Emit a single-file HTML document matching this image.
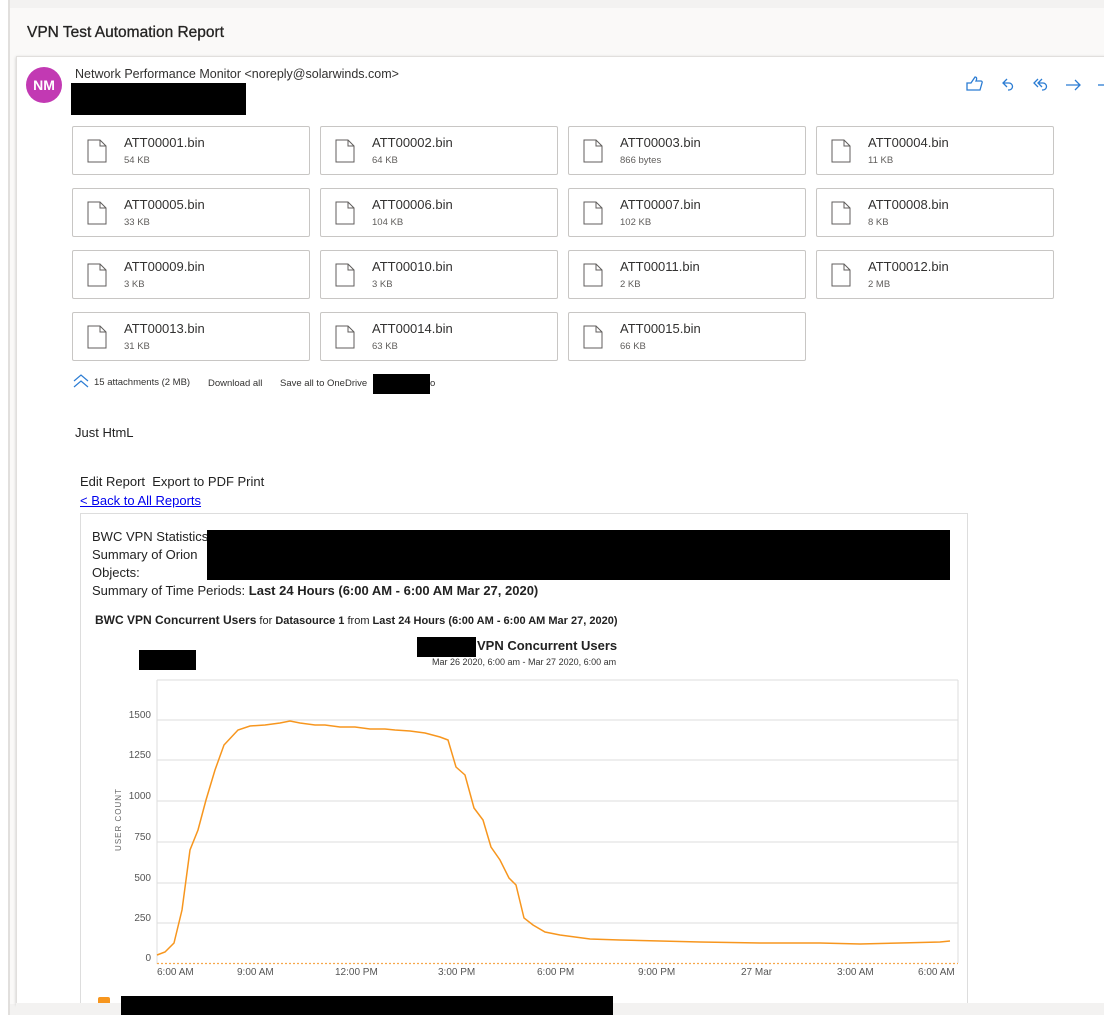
<!DOCTYPE html>
<html><head><meta charset="utf-8"><style>
*{margin:0;padding:0;box-sizing:border-box}
body{width:1104px;height:1015px;overflow:hidden;background:#f3f2f1;font-family:"Liberation Sans",sans-serif;position:relative;color:#323130}
.a{position:absolute}
.att{position:absolute;width:238px;height:49px;border:1px solid #c8c6c4;background:#fff;border-radius:2px}
.att svg{position:absolute;left:14px;top:12px}
.att .n{position:absolute;left:51px;top:8px;font-size:13px;color:#323130}
.att .s{position:absolute;left:51px;top:28px;font-size:9.5px;color:#605e5c}
.yl{position:absolute;width:40px;text-align:right;font-size:10px;color:#555;left:111px}
.xl{position:absolute;font-size:10px;color:#555;top:967px}
</style></head><body>
<div class="a" style="left:0;top:0;width:8px;height:1015px;background:#fff"></div>
<div class="a" style="left:8px;top:0;width:2px;height:1015px;background:#e1dfdd"></div>
<div class="a" style="left:10px;top:8px;width:1094px;height:996px;background:#faf9f8"></div>
<div class="a" style="left:27px;top:24px;font-size:15.5px;color:#252423;-webkit-text-stroke:0.3px #252423">VPN Test Automation Report</div>
<div class="a" style="left:16px;top:56px;width:1090px;height:948px;background:#fff;border:1px solid #e1dfdd;box-shadow:0 1px 3px rgba(0,0,0,.2)"></div>
<div class="a" style="left:26px;top:67px;width:36px;height:36px;border-radius:50%;background:#c239b3;color:#fff;font-weight:bold;font-size:14px;line-height:36px;text-align:center">NM</div>
<div class="a" style="left:75px;top:67px;font-size:12.5px;color:#323130">Network Performance Monitor &lt;noreply@solarwinds.com&gt;</div>
<div class="a" style="left:71px;top:83px;width:175px;height:32px;background:#000"></div>
<svg class="a" style="left:962px;top:74px" width="142" height="22" viewBox="0 0 142 22" fill="none" stroke="#2b7cd3" stroke-width="1.3">
<path d="M5 9h4l4-6c2 0 2 2 1 4h5c1 0 1.5 1 1 2l-2 7h-13z"/>
<path d="M45 5l-4 4 4 4M41 9h6a3.5 3.5 0 010 7h-1"/>
<path d="M76 5l-4 4 4 4M80 5l-4 4 4 4M77 9h4a3.5 3.5 0 010 7h-1"/>
<path d="M104 11h14M113 6l5 5-5 5"/>
<path d="M136 11h6"/>
</svg>
<div class="att" style="left:72px;top:126px"><svg width="20" height="24"><path d="M1 1h12l6 6v16H1z M13 1v6h6" fill="none" stroke="#605e5c"/></svg><div class="n">ATT00001.bin</div><div class="s">54 KB</div></div>
<div class="att" style="left:320px;top:126px"><svg width="20" height="24"><path d="M1 1h12l6 6v16H1z M13 1v6h6" fill="none" stroke="#605e5c"/></svg><div class="n">ATT00002.bin</div><div class="s">64 KB</div></div>
<div class="att" style="left:568px;top:126px"><svg width="20" height="24"><path d="M1 1h12l6 6v16H1z M13 1v6h6" fill="none" stroke="#605e5c"/></svg><div class="n">ATT00003.bin</div><div class="s">866 bytes</div></div>
<div class="att" style="left:816px;top:126px"><svg width="20" height="24"><path d="M1 1h12l6 6v16H1z M13 1v6h6" fill="none" stroke="#605e5c"/></svg><div class="n">ATT00004.bin</div><div class="s">11 KB</div></div>
<div class="att" style="left:72px;top:188px"><svg width="20" height="24"><path d="M1 1h12l6 6v16H1z M13 1v6h6" fill="none" stroke="#605e5c"/></svg><div class="n">ATT00005.bin</div><div class="s">33 KB</div></div>
<div class="att" style="left:320px;top:188px"><svg width="20" height="24"><path d="M1 1h12l6 6v16H1z M13 1v6h6" fill="none" stroke="#605e5c"/></svg><div class="n">ATT00006.bin</div><div class="s">104 KB</div></div>
<div class="att" style="left:568px;top:188px"><svg width="20" height="24"><path d="M1 1h12l6 6v16H1z M13 1v6h6" fill="none" stroke="#605e5c"/></svg><div class="n">ATT00007.bin</div><div class="s">102 KB</div></div>
<div class="att" style="left:816px;top:188px"><svg width="20" height="24"><path d="M1 1h12l6 6v16H1z M13 1v6h6" fill="none" stroke="#605e5c"/></svg><div class="n">ATT00008.bin</div><div class="s">8 KB</div></div>
<div class="att" style="left:72px;top:250px"><svg width="20" height="24"><path d="M1 1h12l6 6v16H1z M13 1v6h6" fill="none" stroke="#605e5c"/></svg><div class="n">ATT00009.bin</div><div class="s">3 KB</div></div>
<div class="att" style="left:320px;top:250px"><svg width="20" height="24"><path d="M1 1h12l6 6v16H1z M13 1v6h6" fill="none" stroke="#605e5c"/></svg><div class="n">ATT00010.bin</div><div class="s">3 KB</div></div>
<div class="att" style="left:568px;top:250px"><svg width="20" height="24"><path d="M1 1h12l6 6v16H1z M13 1v6h6" fill="none" stroke="#605e5c"/></svg><div class="n">ATT00011.bin</div><div class="s">2 KB</div></div>
<div class="att" style="left:816px;top:250px"><svg width="20" height="24"><path d="M1 1h12l6 6v16H1z M13 1v6h6" fill="none" stroke="#605e5c"/></svg><div class="n">ATT00012.bin</div><div class="s">2 MB</div></div>
<div class="att" style="left:72px;top:312px"><svg width="20" height="24"><path d="M1 1h12l6 6v16H1z M13 1v6h6" fill="none" stroke="#605e5c"/></svg><div class="n">ATT00013.bin</div><div class="s">31 KB</div></div>
<div class="att" style="left:320px;top:312px"><svg width="20" height="24"><path d="M1 1h12l6 6v16H1z M13 1v6h6" fill="none" stroke="#605e5c"/></svg><div class="n">ATT00014.bin</div><div class="s">63 KB</div></div>
<div class="att" style="left:568px;top:312px"><svg width="20" height="24"><path d="M1 1h12l6 6v16H1z M13 1v6h6" fill="none" stroke="#605e5c"/></svg><div class="n">ATT00015.bin</div><div class="s">66 KB</div></div>
<svg class="a" style="left:73px;top:374px" width="16" height="14" fill="none" stroke="#2b7cd3" stroke-width="1.2"><path d="M1 7l7-6 7 6M1 13l7-6 7 6"/></svg>
<div class="a" style="left:94px;top:377px;font-size:9.5px;color:#323130">15 attachments (2 MB)</div>
<div class="a" style="left:208px;top:378px;font-size:9.5px;color:#323130">Download all</div>
<div class="a" style="left:280px;top:378px;font-size:9.5px;color:#323130">Save all to OneDrive</div>
<div class="a" style="left:373px;top:374px;width:57px;height:20px;background:#000"></div>
<div class="a" style="left:430px;top:378px;font-size:9.5px">o</div>
<div class="a" style="left:75px;top:425px;font-size:13px;color:#222">Just HtmL</div>
<div class="a" style="left:80px;top:474px;font-size:13px;color:#222">Edit Report&nbsp; Export to PDF Print</div>
<div class="a" style="left:80px;top:493px;font-size:13px;color:#00e;text-decoration:underline">&lt; Back to All Reports</div>
<div class="a" style="left:80px;top:513px;width:888px;height:502px;border:1px solid #ddd;border-bottom:none;background:#fff"></div>
<div class="a" style="left:92px;top:528px;font-size:13px;line-height:18px;color:#222">BWC VPN Statistics<br>Summary of Orion<br>Objects:<br>Summary of Time Periods: <b>Last 24 Hours (6:00 AM - 6:00 AM Mar 27, 2020)</b></div>
<div class="a" style="left:207px;top:530px;width:743px;height:50px;background:#000"></div>
<div class="a" style="left:95px;top:613px;font-size:11px;color:#222"><b style="font-size:12px">BWC VPN Concurrent Users</b> for <b>Datasource 1</b> from <b>Last 24 Hours (6:00 AM - 6:00 AM Mar 27, 2020)</b></div>
<div class="a" style="left:139px;top:650px;width:57px;height:20px;background:#000"></div>
<div class="a" style="left:417px;top:637px;width:59px;height:20px;background:#000"></div>
<div class="a" style="left:477px;top:638px;font-size:13px;font-weight:bold;color:#222">VPN Concurrent Users</div>
<div class="a" style="left:432px;top:657px;font-size:9px;color:#333">Mar 26 2020, 6:00 am - Mar 27 2020, 6:00 am</div>
<svg class="a" style="left:0;top:0" width="1104" height="1015">
<g stroke="#ddd" stroke-width="1">
<line x1="157" y1="680" x2="958" y2="680"/><line x1="958" y1="680" x2="958" y2="963"/>
<line x1="157" y1="720" x2="958" y2="720"/><line x1="157" y1="760" x2="958" y2="760"/><line x1="157" y1="801" x2="958" y2="801"/><line x1="157" y1="842" x2="958" y2="842"/><line x1="157" y1="883" x2="958" y2="883"/><line x1="157" y1="923" x2="958" y2="923"/>
<line x1="157" y1="680" x2="157" y2="964"/>
</g>
<line x1="157" y1="963.5" x2="958" y2="963.5" stroke="#f7a74a" stroke-width="1.3" stroke-dasharray="2 2"/>
<polyline fill="none" stroke="#f7961e" stroke-width="1.5" points="157,955 165,952 174,943 182,910 190,850 198,830 206,800 215,770 224,745 238,730 250,726 265,725 280,723 290,721 300,723 315,725 325,725 340,727 355,727 370,729 385,729 395,730 410,731 425,733 440,737 448,740 456,767 465,775 474,808 483,820 491,847 500,860 509,878 516,885 524,918 533,925 545,932 560,935 575,937 590,939 620,940 660,941 700,942 760,943 820,943 860,944 900,943 940,942 950,941"/>
</svg>
<div class="yl" style="top:710px">1500</div>
<div class="yl" style="top:750px">1250</div>
<div class="yl" style="top:791px">1000</div>
<div class="yl" style="top:832px">750</div>
<div class="yl" style="top:873px">500</div>
<div class="yl" style="top:913px">250</div>
<div class="yl" style="top:953px">0</div>
<div class="a" style="left:87px;top:815px;font-size:8px;color:#666;transform:rotate(-90deg);letter-spacing:1px">USER COUNT</div>
<div class="xl" style="left:157px">6:00 AM</div>
<div class="xl" style="left:237px">9:00 AM</div>
<div class="xl" style="left:335px">12:00 PM</div>
<div class="xl" style="left:438px">3:00 PM</div>
<div class="xl" style="left:537px">6:00 PM</div>
<div class="xl" style="left:638px">9:00 PM</div>
<div class="xl" style="left:741px">27 Mar</div>
<div class="xl" style="left:837px">3:00 AM</div>
<div class="xl" style="left:918px">6:00 AM</div>
<div class="a" style="left:98px;top:997px;width:12px;height:10px;background:#f7961e;border-radius:2px"></div>
<div class="a" style="left:16px;top:1003px;width:1090px;height:12px;background:#f3f2f1"></div>
<div class="a" style="left:121px;top:996px;width:492px;height:19px;background:#000"></div>
</body></html>
